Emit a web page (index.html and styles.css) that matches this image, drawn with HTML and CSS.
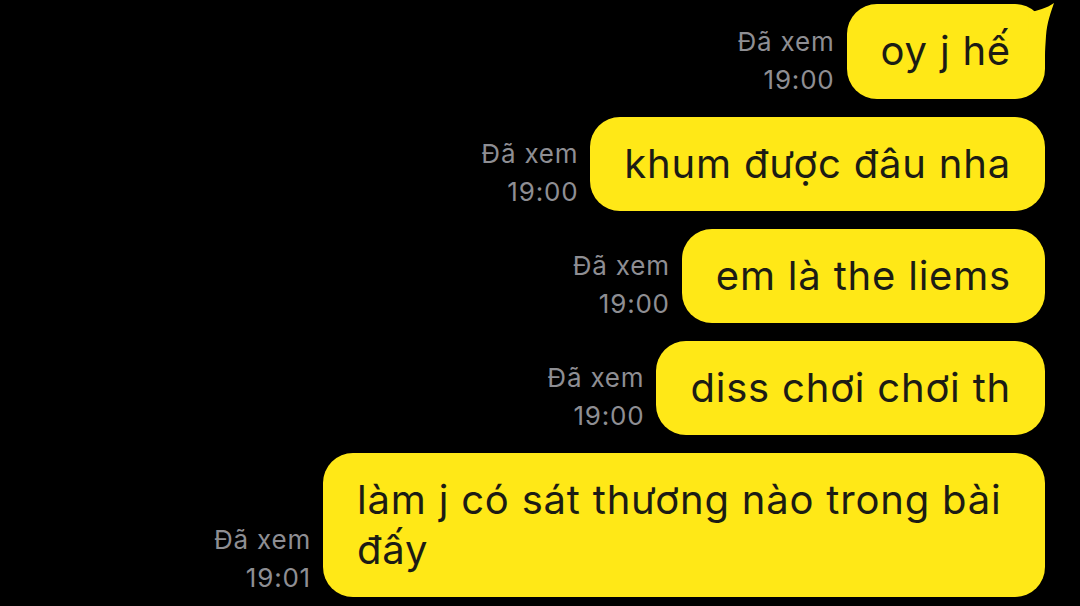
FILE: index.html
```html
<!DOCTYPE html>
<html lang="vi">
<head>
    <meta charset="UTF-8">
    <meta name="viewport" content="width=device-width, initial-scale=1.0">
    <title>Chat</title>
    <link rel="stylesheet" href="styles.css">
</head>
<body>
    <div class="chat">
        <div class="row">
            <div class="meta">Đã xem<br>19:00</div>
            <div class="bubble first">
                oy j hế
                <svg class="tail" width="40" height="60" viewBox="0 0 40 60">
                    <path d="M12 12 C20 11 30 8 37 3 C34 12 30 22 29 36 C28.5 44 28 50 28 56 L10 56 Z" fill="#ffe817"/>
                </svg>
            </div>
        </div>
        <div class="row">
            <div class="meta">Đã xem<br>19:00</div>
            <div class="bubble">khum được đâu nha</div>
        </div>
        <div class="row">
            <div class="meta">Đã xem<br>19:00</div>
            <div class="bubble">em là the liems</div>
        </div>
        <div class="row">
            <div class="meta">Đã xem<br>19:00</div>
            <div class="bubble">diss chơi chơi th</div>
        </div>
        <div class="row">
            <div class="meta">Đã xem<br>19:01</div>
            <div class="bubble wide">làm j có sát thương nào trong bài đấy</div>
        </div>
    </div>
</body>
</html>
```

FILE: styles.css
```css
* {
    margin: 0;
    padding: 0;
    box-sizing: border-box;
}

body {
    background: #000;
    font-family: Inter, 'Liberation Sans', sans-serif;
    width: 1080px;
    height: 606px;
    overflow: hidden;
}

.chat {
    display: flex;
    flex-direction: column;
    align-items: flex-end;
    gap: 18px;
    padding: 4px 35px 0 0;
}

.row {
    display: flex;
    align-items: flex-end;
    gap: 12px;
}

.meta {
    color: #8e8e93;
    font-size: 26px;
    line-height: 38px;
    letter-spacing: 0.8px;
    text-align: right;
    white-space: nowrap;
}

.bubble {
    position: relative;
    background: #ffe817;
    color: #1c1c14;
    font-size: 40px;
    line-height: 50px;
    letter-spacing: 0.8px;
    padding: 22px 34px;
    border-radius: 30px;
}

.bubble.first {
    padding: 22px 34px 23px;
}

.bubble.wide {
    width: 722px;
}

/* little tail on the top bubble */
.tail {
    position: absolute;
    top: -4px;
    right: -12px;
}
```
